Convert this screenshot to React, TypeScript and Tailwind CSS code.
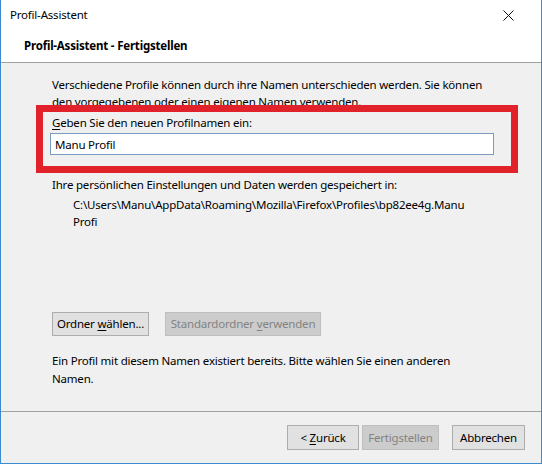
import React from 'react';

const FONT = { fontFamily: '"Noto Sans", "Open Sans", sans-serif' };

const Btn: React.FC<{ children: React.ReactNode; disabled?: boolean; className?: string }> = ({ children, disabled, className }) => (
  <div
    className={
      'flex items-center justify-center border leading-none ' +
      (disabled ? 'bg-[#cccccc] border-[#bfbfbf] text-[#838383] ' : 'bg-[#e1e1e1] border-[#adadad] text-black ') +
      (className || '')
    }
  >
    {children}
  </div>
);

export default function App() {
  return (
    <div
      className="relative w-[542px] h-[464px] bg-white border-l border-r border-b border-[#3b8bd0] flex flex-col text-[11.5px] tracking-[-0.2px] text-black"
      style={FONT}
    >
      {/* Titelleiste */}
      <div className="h-[30px] flex items-center justify-between pl-[9px] pr-[27px]">
        <span>Profil-Assistent</span>
        <svg width="11" height="11" viewBox="0 0 11 11" className="mt-[1px]">
          <path d="M0.5 0.5 L10.5 10.5 M10.5 0.5 L0.5 10.5" stroke="#111" strokeWidth="1" />
        </svg>
      </div>

      {/* Kopfbereich */}
      <div className="h-[33px] flex items-center pl-[23px] border-b border-[#a0a0a0] font-bold">
        Profil-Assistent - Fertigstellen
      </div>

      {/* Inhalt */}
      <div className="h-[348px] bg-[#f0f0f0] pl-[49px] pt-[13px] leading-[17px]">
        <p className="pl-[2px] w-[450px]">
          Verschiedene Profile können durch ihre Namen unterschieden werden. Sie können den vorgegebenen oder einen
          eigenen Namen verwenden.
        </p>
        <p className="pl-[2px] mt-[4px]">
          <span className="underline underline-offset-2">G</span>eben Sie den neuen Profilnamen ein:
        </p>
        <div className="mt-[2px] w-[444px] h-[22px] bg-white border border-[#7a9cc0] flex items-center pl-[4px]">
          Manu Profil
        </div>
        <p className="pl-[2px] mt-[21px]">Ihre persönlichen Einstellungen und Daten werden gespeichert in:</p>
        <p className="pl-[23px] mt-[3px] w-[440px]">
          C:\Users\Manu\AppData\Roaming\Mozilla\Firefox\Profiles\bp82ee4g.Manu Profi
        </p>
        <div className="flex gap-[16px] ml-[2px] mt-[82px]">
          <Btn className="w-[97px] h-[24px]">
            Ordner&nbsp;<span className="underline underline-offset-2">w</span>ählen...
          </Btn>
          <Btn disabled className="w-[156px] h-[24px]">
            Standardordner&nbsp;<span className="underline underline-offset-2">v</span>erwenden
          </Btn>
        </div>
        <p className="pl-[2px] mt-[16px] w-[440px] leading-[18px]">
          Ein Profil mit diesem Namen existiert bereits. Bitte wählen Sie einen anderen Namen.
        </p>
      </div>

      {/* Fußleiste */}
      <div className="flex-1 bg-[#f0f0f0] border-t border-[#a0a0a0] flex justify-end items-start pt-[13px] pr-[16px]">
        <Btn className="w-[72px] h-[25px]">
          &lt;&nbsp;<span className="underline underline-offset-2">Z</span>urück
        </Btn>
        <Btn disabled className="w-[77px] h-[25px] ml-[3px]">
          Fertigstellen
        </Btn>
        <Btn className="w-[73px] h-[25px] ml-[13px]">Abbrechen</Btn>
      </div>

      {/* rote Markierung */}
      <div className="absolute left-[35px] top-[105px] w-[482px] h-[68px] border-[7px] border-[#e1222b]" />
    </div>
  );
}
